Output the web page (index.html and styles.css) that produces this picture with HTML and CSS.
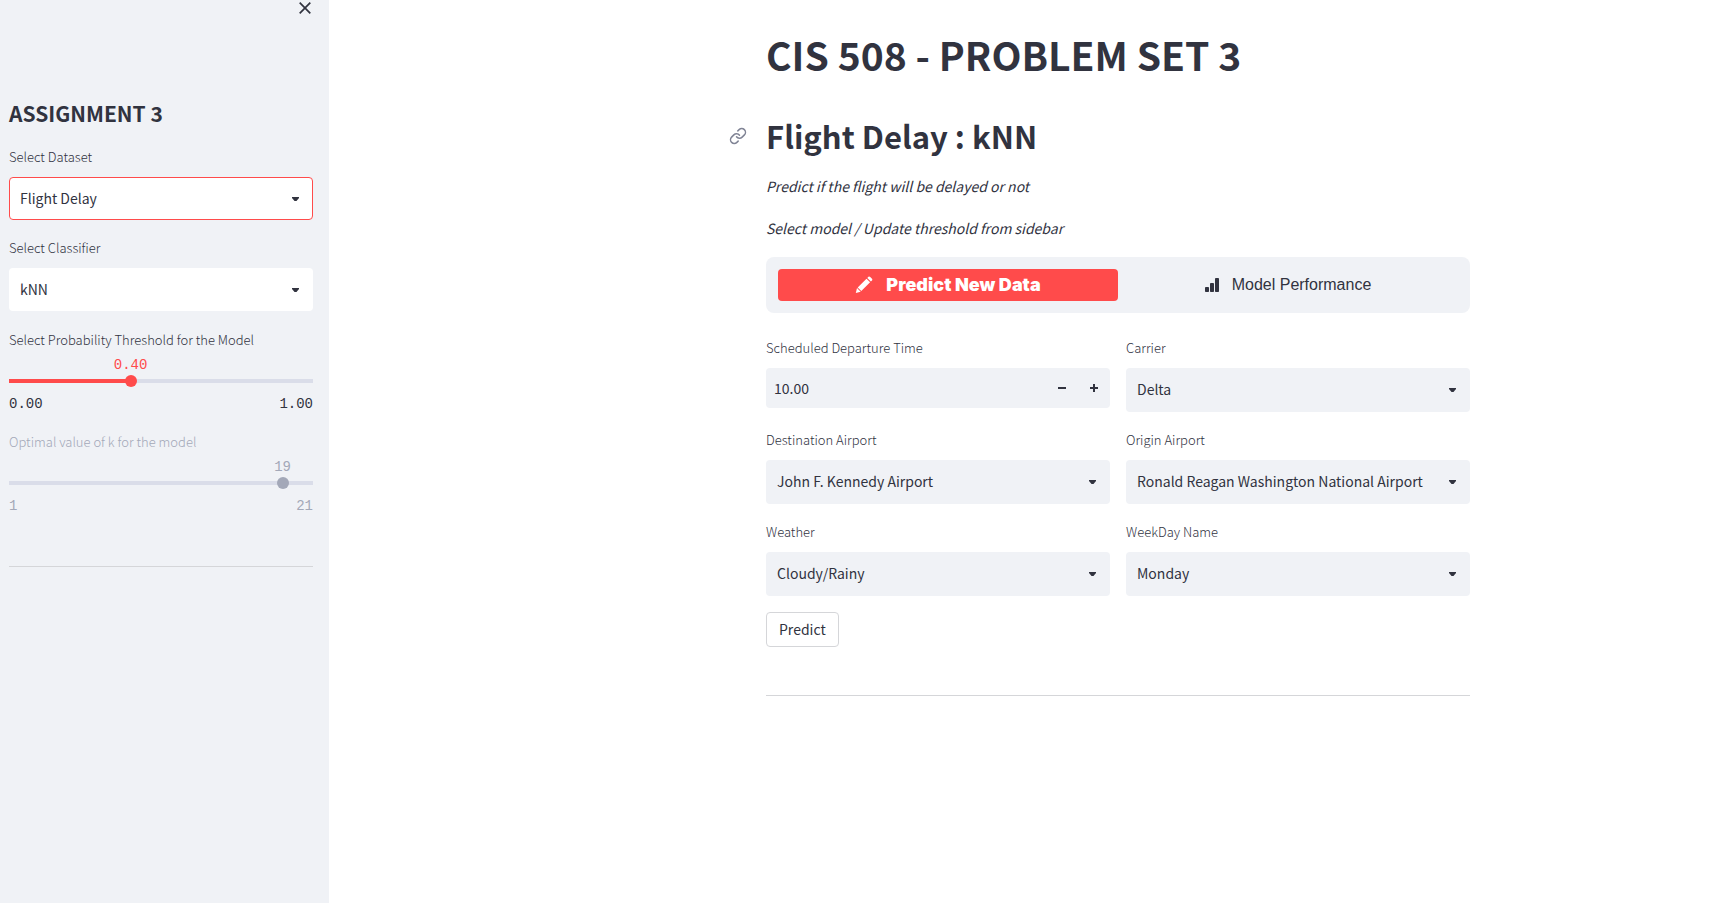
FILE: index.html
```html
<!DOCTYPE html>
<html lang="en">
<head>
<meta charset="utf-8">
<title>CIS 508 - Problem Set 3</title>
<link rel="stylesheet" href="styles.css">
</head>
<body>
<svg class="sprite" aria-hidden="true">
  <symbol id="caret" viewBox="0 0 7 4"><path d="M0 0H7V1L4.5 4H2.5L0 1Z"/></symbol>
</svg>
<div class="app">
  <aside class="sidebar">
    <div class="sidebar-top">
      <button class="close" type="button" aria-label="Close sidebar">
        <svg width="12" height="12" viewBox="0 0 12 12"><path d="M.7 .7L11.3 11.3M11.3 .7L.7 11.3" fill="none" stroke="currentColor" stroke-width="1.7"/></svg>
      </button>
    </div>
    <h3 class="sidebar-title">ASSIGNMENT 3</h3>
    <div class="field">
      <label class="label" for="dataset">Select Dataset</label>
      <div class="select select-focus">
        <select id="dataset"><option>Flight Delay</option></select>
        <svg class="caret"><use href="#caret"/></svg>
      </div>
    </div>
    <div class="field">
      <label class="label" for="classifier">Select Classifier</label>
      <div class="select">
        <select id="classifier"><option>kNN</option></select>
        <svg class="caret"><use href="#caret"/></svg>
      </div>
    </div>
    <div class="slider">
      <label class="label" for="threshold">Select Probability Threshold for the Model</label>
      <div class="slider-control" style="--pos: 40%">
        <output class="slider-value" for="threshold">0.40</output>
        <div class="track"><input id="threshold" type="range" min="0" max="1" step="0.01" value="0.4"></div>
      </div>
      <div class="ticks"><span>0.00</span><span>1.00</span></div>
    </div>
    <div class="slider slider-disabled">
      <label class="label" for="kvalue">Optimal value of k for the model</label>
      <div class="slider-control" style="--pos: 90%">
        <output class="slider-value" for="kvalue">19</output>
        <div class="track"><input id="kvalue" type="range" min="1" max="21" value="19" disabled></div>
      </div>
      <div class="ticks"><span>1</span><span>21</span></div>
    </div>
    <hr class="rule">
  </aside>
  <main class="main">
    <div class="content">
      <h1 class="title">CIS 508 - PROBLEM SET 3</h1>
      <h2 class="subtitle">
        <a class="anchor" href="#flight-delay" aria-label="Link to this section">
          <svg width="18" height="18" viewBox="0 0 24 24" fill="none" stroke="currentColor" stroke-width="2" stroke-linecap="round" stroke-linejoin="round"><path d="M10 13a5 5 0 0 0 7.54.54l3-3a5 5 0 0 0-7.07-7.07l-1.72 1.71"/><path d="M14 11a5 5 0 0 0-7.54-.54l-3 3a5 5 0 0 0 7.07 7.07l1.71-1.71"/></svg>
        </a>
        <span id="flight-delay">Flight Delay : kNN</span>
      </h2>
      <p class="note">Predict if the flight will be delayed or not</p>
      <p class="note">Select model / Update threshold from sidebar</p>
      <nav class="tabs">
        <a class="tab tab-active" href="#predict">
          <svg width="18" height="18" viewBox="0 0 18 18" fill="currentColor"><path d="M12.3 1.9L13.4.8Q14.3.1 15.2.9L17 2.7Q17.8 3.6 17 4.5L15.9 5.6ZM11.5 2.7L15.1 6.3L6.3 15L2.7 11.4ZM2 12.1L5.7 15.8L.8 17Z"/></svg>
          <span>Predict New Data</span>
        </a>
        <a class="tab" href="#performance">
          <svg width="14" height="14" viewBox="0 0 14 14" fill="currentColor"><rect x="0" y="9" width="4" height="5" rx=".8"/><rect x="5" y="5" width="4" height="9" rx=".8"/><rect x="10" y="0" width="4" height="14" rx=".8"/></svg>
          <span>Model Performance</span>
        </a>
      </nav>
      <form id="predict">
        <div class="grid">
          <div class="field">
            <label class="label" for="departure">Scheduled Departure Time</label>
            <div class="number">
              <input id="departure" type="text" inputmode="decimal" value="10.00">
              <button type="button" aria-label="Decrease"><svg width="8" height="8" viewBox="0 0 8 8"><path d="M0 4H8" stroke="currentColor" stroke-width="2"/></svg></button>
              <button type="button" aria-label="Increase"><svg width="8" height="8" viewBox="0 0 8 8"><path d="M0 4H8M4 0V8" stroke="currentColor" stroke-width="2"/></svg></button>
            </div>
          </div>
          <div class="field">
            <label class="label" for="carrier">Carrier</label>
            <div class="select"><select id="carrier"><option>Delta</option></select><svg class="caret"><use href="#caret"/></svg></div>
          </div>
          <div class="field">
            <label class="label" for="destination">Destination Airport</label>
            <div class="select"><select id="destination"><option>John F. Kennedy Airport</option></select><svg class="caret"><use href="#caret"/></svg></div>
          </div>
          <div class="field">
            <label class="label" for="origin">Origin Airport</label>
            <div class="select"><select id="origin"><option>Ronald Reagan Washington National Airport</option></select><svg class="caret"><use href="#caret"/></svg></div>
          </div>
          <div class="field">
            <label class="label" for="weather">Weather</label>
            <div class="select"><select id="weather"><option>Cloudy/Rainy</option></select><svg class="caret"><use href="#caret"/></svg></div>
          </div>
          <div class="field">
            <label class="label" for="weekday">WeekDay Name</label>
            <div class="select"><select id="weekday"><option>Monday</option></select><svg class="caret"><use href="#caret"/></svg></div>
          </div>
        </div>
        <button class="predict" type="button">Predict</button>
      </form>
      <hr class="rule">
    </div>
  </main>
</div>
</body>
</html>
```
FILE: styles.css
```css
:root {
  --text: #31333f;
  --primary: #ff4b4b;
  --panel: #f0f2f6;
  --track: #dadde9;
  --muted: #a3a8b8;
  --sans: "Noto Sans CJK SC", "Open Sans", sans-serif;
  --mono: "Liberation Mono", monospace;
}

* { box-sizing: border-box; }

body {
  margin: 0;
  color: var(--text);
  background: #fff;
  font: 14px/24px var(--sans);
}

h1, h2, h3, p { margin: 0; }

button, input, select { font: inherit; color: inherit; }

.sprite { position: absolute; width: 0; height: 0; }

.app { display: flex; min-height: 100vh; }

.sidebar {
  flex: none;
  width: 329px;
  padding: 0 16px 0 9px;
  background: var(--panel);
}

.sidebar-top { display: flex; justify-content: flex-end; height: 97px; }

.close {
  display: flex;
  width: 16px;
  height: 16px;
  align-items: center;
  justify-content: center;
  padding: 0;
  border: 0;
  background: none;
}

.sidebar-title {
  margin-bottom: 16px;
  font-size: 21px;
  font-weight: 700;
  line-height: 32px;
}

.sidebar .field { margin-bottom: 16px; }

.label {
  display: block;
  margin-bottom: 8px;
  font-size: 13px;
  font-weight: 300;
  line-height: 24px;
}

.select { display: grid; align-items: center; }
.select > * { grid-area: 1 / 1; }

.select select {
  width: 100%;
  height: 44px;
  padding: 0 32px 2px 10px;
  border: 1px solid transparent;
  border-radius: 4px;
  appearance: none;
  background: var(--panel);
}

.sidebar .select select { height: 43px; padding-bottom: 1px; background: #fff; }
.sidebar .select-focus select { border-color: var(--primary); }

.caret {
  justify-self: end;
  width: 7px;
  height: 4px;
  margin-right: 14px;
  fill: var(--text);
  pointer-events: none;
}

.slider { margin-bottom: 13px; padding-top: 1px; }
.slider .label { margin-bottom: 0; }

.slider-control {
  position: relative;
  padding-top: 23px;
}

.slider-value {
  position: absolute;
  top: 1px;
  left: var(--pos);
  transform: translateX(-50%);
  color: var(--primary);
  font: 14px/24px var(--mono);
}

.track {
  display: flex;
  align-items: center;
  height: 12px;
  background: linear-gradient(to right, var(--primary) var(--pos), var(--track) var(--pos)) center / 100% 4px no-repeat;
}

.track input {
  flex: 1;
  height: 12px;
  margin: 0 -6px;
  appearance: none;
  background: none;
}

.track input::-webkit-slider-thumb {
  width: 12px;
  height: 12px;
  border-radius: 50%;
  appearance: none;
  background: var(--primary);
}

.ticks {
  display: flex;
  justify-content: space-between;
  margin-top: 5px;
  font: 14px/24px var(--mono);
}

.slider-disabled,
.slider-disabled .slider-value { color: var(--muted); }
.slider-disabled .track { background-image: linear-gradient(var(--track), var(--track)); }
.slider-disabled .track input::-webkit-slider-thumb { background: var(--muted); }

.rule {
  margin: 48px 0;
  border: 0;
  border-top: 1px solid #d5d6d9;
}

.main { flex: 1; padding: 30px 0 0 172px; }

.content { max-width: 704px; margin: 0 auto; }

.title { font-size: 39px; font-weight: 700; line-height: 48px; }

.subtitle {
  display: flex;
  align-items: center;
  margin: 34px 0 14px -37px;
  font-size: 31px;
  font-weight: 700;
  line-height: 48px;
}

.anchor { display: flex; width: 37px; color: #808495; }

.note { margin-bottom: 18px; font-style: italic; }

.tabs {
  display: flex;
  padding: 12px;
  margin-top: 17px;
  border-radius: 8px;
  background: var(--panel);
  font-family: "Liberation Sans", Arial, sans-serif;
  font-size: 16px;
}

.note:last-of-type { margin-bottom: 0; }

.tab {
  display: flex;
  flex: 1;
  align-items: center;
  justify-content: center;
  gap: 13px;
  height: 32px;
  border-radius: 4px;
  color: var(--text);
  text-decoration: none;
}

.tab-active {
  color: #fff;
  background: var(--primary);
  font-family: Inter, "Arial Black", sans-serif;
  font-size: 18px;
  font-weight: 900;
}

.grid {
  display: grid;
  grid-template-columns: 1fr 1fr;
  gap: 16px;
  margin: 23px 0 16px;
}

.number {
  display: flex;
  height: 40px;
  overflow: hidden;
  border-radius: 4px;
  background: var(--panel);
}

.number input {
  flex: 1;
  min-width: 0;
  padding: 0 8px;
  border: 0;
  background: none;
}

.number button {
  display: flex;
  width: 32px;
  align-items: center;
  justify-content: center;
  padding: 0;
  border: 0;
  background: none;
}

.predict {
  height: 35px;
  padding: 0 12px 2px;
  border: 1px solid #d5d6d9;
  border-radius: 4px;
  background: #fff;
}
```
